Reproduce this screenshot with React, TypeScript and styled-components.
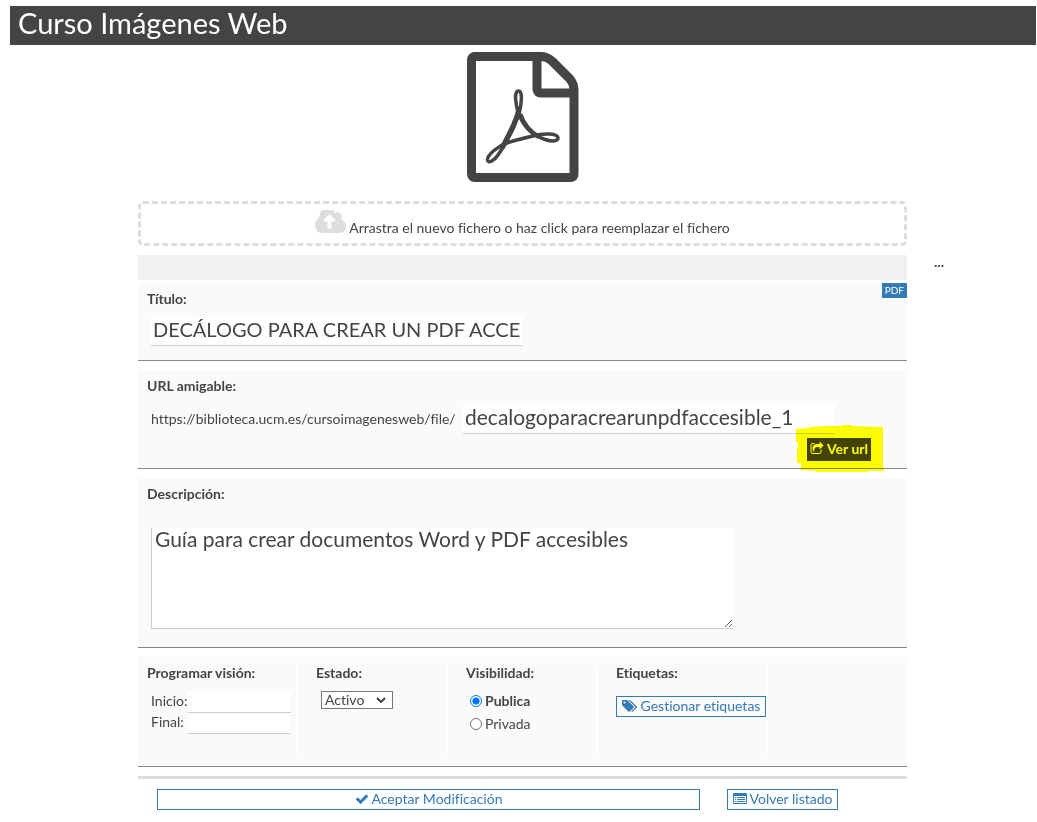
import React from 'react';
import styled, { createGlobalStyle, css } from 'styled-components';

const ink = '#444444';
const blue = '#337ab7';

const GlobalStyle = createGlobalStyle`
  *, *::before, *::after { box-sizing: border-box; }
  body {
    margin: 0;
    background: #ffffff;
    color: ${ink};
    font-family: Lato, "Liberation Sans", sans-serif;
    font-size: 14px;
    font-variant-ligatures: none;
    line-height: 20px;
  }
  input, select, textarea, button { font: inherit; font-variant-ligatures: none; color: inherit; border-radius: 0; }
`;

const Page = styled.div`
  padding: 6px 1px 12px 10px;
`;

const Header = styled.header`
  padding: 0 8px;
  background: ${ink};
  color: #ffffff;
`;

const PageTitle = styled.h1`
  margin: 0;
  font-size: 29px;
  font-weight: 400;
  line-height: 34px;
  padding-bottom: 5px;
`;

const Columns = styled.div`
  display: grid;
  grid-template-columns: 128fr 769fr 129fr;
`;

const Main = styled.main`
  grid-column: 2;
  min-width: 0;
`;

const Aside = styled.aside`
  padding: 207px 27px 0;
  font-weight: 700;
`;

const Preview = styled.div`
  display: flex;
  justify-content: center;
  padding: 7px 0 18px;
`;

const Icon = styled.svg<{ $w: number; $h: number }>`
  display: block;
  flex: none;
  width: ${(p) => p.$w}px;
  height: ${(p) => p.$h}px;
  fill: currentColor;
`;

const DropZone = styled.button`
  display: flex;
  align-items: center;
  justify-content: center;
  gap: 3px;
  width: 100%;
  height: 45px;
  padding: 0 0 4px;
  border: 3px dashed #dddddd;
  border-radius: 5px;
  background: transparent;
  cursor: pointer;

  svg { color: #dddddd; }
  span { padding-top: 12px; }
`;

const Toolbar = styled.div`
  height: 25px;
  margin: 9px 0 3px;
  background: #f1f1f1;
`;

const Panel = styled.section<{ $height: number }>`
  display: flex;
  flex-direction: column;
  position: relative;
  min-height: ${(p) => p.$height}px;
  margin-bottom: 9px;
  padding: 6px 9px 0;
  border-bottom: 1px solid #888888;
  background: #fafafa;
`;

const labelText = css`
  display: block;
  margin: 0;
  font-size: 14px;
  font-weight: 700;
  line-height: 20px;
`;

const Label = styled.label`${labelText}`;
const Heading = styled.h2`${labelText}`;

const Badge = styled.span`
  position: absolute;
  top: 0;
  right: 0;
  padding: 0 3px;
  background: ${blue};
  color: #ffffff;
  font-size: 10px;
  line-height: 15px;
`;

const TextInput = styled.input`
  width: 372px;
  height: 30px;
  min-width: 0;
  padding: 0 2px 4px;
  border: 0;
  border-bottom: 1px solid #cccccc;
  background: #ffffff;
  font-size: 21px;
`;

const TitleInput = styled(TextInput)`
  margin: 7px 0 0 4px;
  font-size: 20px;
`;

const UrlRow = styled.div`
  display: flex;
  align-items: center;
  margin: 8px 0 0 4px;
`;

const UrlPrefix = styled.span`
  flex: 0 0 312px;
`;

const ViewLink = styled.a`
  display: flex;
  align-items: center;
  align-self: flex-end;
  gap: 3px;
  height: 23px;
  margin: 4px 27px 0 0;
  padding: 0 3px 1px;
  background: ${ink};
  color: #ffffff;
  font-weight: 700;
  text-decoration: none;
`;

const Marker = styled.svg`
  position: absolute;
  right: 23px;
  bottom: -5px;
  z-index: 1;
  width: 88px;
  height: 49px;
  fill: #ffff00;
  mix-blend-mode: multiply;
  pointer-events: none;
`;

const Description = styled.textarea`
  display: block;
  width: 582px;
  max-width: 100%;
  height: 101px;
  margin: 24px 0 0 4px;
  padding: 0 3px;
  border: 0;
  border-left: 1px solid #cccccc;
  border-bottom: 1px solid #cccccc;
  background: #ffffff;
  font-size: 21px;
  line-height: 22px;
  resize: both;
`;

const Options = styled(Panel)`
  display: grid;
  grid-template-columns: 160fr 150fr 150fr 170fr 139fr;
  padding: 9px 0 10px;
`;

const Option = styled.div`
  min-width: 0;
  padding-left: 18px;
  border-right: 2px solid #ffffff;

  &:first-child { padding-left: 9px; }
  &:last-child { border-right: 0; }
`;

const OptionHeading = styled(Heading)`
  line-height: 14px;
`;

const OptionLabel = styled(Label)`
  line-height: 14px;
`;

const DateList = styled.div`
  margin: 12px 5px 0 4px;
`;

const DateRow = styled.div`
  display: grid;
  grid-template-columns: 37px 1fr;
  height: 21px;
  line-height: 18px;
`;

const DateInput = styled(TextInput)`
  width: 100%;
  height: 21px;
  font-size: 14px;
`;

const SelectBox = styled.div`
  display: grid;
  grid-template-columns: 1fr 14px;
  align-items: center;
  width: 72px;
  margin: 11px 0 0 5px;
  padding-right: 2px;
  border: 1px solid #767676;
  background: #ffffff;

  select, svg { grid-row: 1; }
  svg { grid-column: 2; pointer-events: none; }
`;

const StateSelect = styled.select`
  appearance: none;
  grid-column: 1 / 3;
  height: 16px;
  padding: 0 16px 0 3px;
  border: 0;
  background: transparent;
  line-height: 16px;
`;

const RadioList = styled.div`
  display: flex;
  flex-direction: column;
  gap: 3px;
  margin: 11px 0 0 4px;
`;

const RadioRow = styled.label<{ $bold?: boolean }>`
  display: flex;
  align-items: center;
  gap: 3px;
  font-weight: ${(p) => (p.$bold ? 700 : 400)};

  input { width: 12px; height: 12px; margin: 0; }
`;

const OutlineButton = styled.button<{ $wide?: boolean }>`
  display: flex;
  align-items: center;
  justify-content: center;
  gap: 3px;
  height: 21px;
  flex: ${(p) => (p.$wide ? '1 1 0' : 'none')};
  padding: 0 4px 2px;
  border: 1px solid ${blue};
  background: #ffffff;
  color: ${blue};
  white-space: nowrap;
  cursor: pointer;
`;

const TagsButton = styled(OutlineButton)`
  width: 150px;
  margin-top: 16px;
  background: transparent;
`;

const BackButton = styled(OutlineButton)`
  width: 111px;
`;

const Actions = styled.div`
  display: flex;
  gap: 27px;
  padding: 10px 69px 0 19px;
  border-top: 3px solid #dddddd;
`;

const PdfIcon = () => (
  <Icon $w={112} $h={131} viewBox="0 0 112 131" role="img" aria-label="Documento PDF">
    <g fill="none" stroke={ink} strokeLinejoin="round">
      <path d="M7 4.500H74Q80 4.500 85 9L103 27Q107 32 107 38V122Q107 125.500 104 125.500H8Q4.500 125.500 4.500 122V8Q4.500 4.500 8 4.500Z" strokeWidth="9" />
      <path d="M70 5V37Q70 41 74 41H107" strokeWidth="9" />
      <path d="M52 62C48 52 47 39 51.500 39C56 39 54.500 52 52 62C56 74 65 83 78 87.500C86 90 91 89 91 86C91 81 76 81 66 84C57 86 48 88 40 91C31 94 20 103 20.500 108C21 112 27 109 31 103C38 93 47 77 52 62Z" strokeWidth="3.500" />
      <path d="M51.500 58C50 68 42 83 35 96" strokeWidth="5" />
      <path d="M53 62C57 73 63 80 72 85" strokeWidth="4.500" />
    </g>
  </Icon>
);

const CloudIcon = () => (
  <Icon $w={31} $h={23} viewBox="0 256 1920 1280" preserveAspectRatio="none">
    <path d="M1280 864q0-14-9-23l-352-352q-9-9-23-9t-23 9l-351 351q-10 12-10 24 0 14 9 23t23 9h224v352q0 13 9.500 22.500t22.500 9.500h192q13 0 22.500-9.500t9.500-22.500v-352h224q13 0 22.500-9.500t9.500-22.500zm640 288q0 159-112.500 271.500t-271.500 112.500h-1088q-185 0-316.500-131.500t-131.500-316.500q0-130 70-240t188-165q-2-30-2-43 0-212 150-362t362-150q156 0 285.500 87t188.500 231q71-62 166-62 106 0 181 75t75 181q0 76-41 138 130 31 213.500 135.500t83.500 238.500z" />
  </Icon>
);

const ShareIcon = () => (
  <Icon $w={14} $h={14} viewBox="0 0 1792 1792">
    <path d="M1472 989v259q0 119-84.500 203.500t-203.500 84.500h-832q-119 0-203.500-84.500t-84.500-203.500v-832q0-119 84.500-203.500t203.500-84.500h255q13 0 22.500 9.500t9.500 22.500q0 27-26 32-77 26-133 60-10 4-16 4h-112q-66 0-113 47t-47 113v832q0 66 47 113t113 47h832q66 0 113-47t47-113v-214q0-19 18-29 28-13 54-37 16-16 35-8 21 9 21 29zm237-496l-384 384q-18 19-45 19-12 0-25-5-39-17-39-59v-192h-160q-323 0-438 131-119 137-74 473 3 23-20 34-8 2-12 2-16 0-26-13-10-14-21-31t-39.500-68.500-49.500-99.500-38.500-114-17.500-122q0-49 3.500-91t14-90 28-88 47-81.500 68.500-74 94.500-61.500 124.500-48.500 159.500-30.500 196.500-11h160v-192q0-42 39-59 13-5 25-5 26 0 45 19l384 384q19 19 19 45t-19 45z" />
  </Icon>
);

const TagsIcon = () => (
  <Icon $w={16} $h={14} viewBox="0 0 1920 1792">
    <path d="M384 448q0-53-37.500-90.500t-90.500-37.500-90.500 37.500-37.500 90.500 37.500 90.500 90.500 37.500 90.500-37.500 37.500-90.500zm1067 576q0 53-37 90l-491 492q-39 37-91 37-53 0-90-37l-715-716q-38-37-64.500-101t-26.500-117v-416q0-52 38-90t90-38h416q53 0 117 26.500t102 64.500l715 714q37 39 37 91zm384 0q0 53-37 90l-491 492q-39 37-91 37-36 0-59-14t-53-45l470-470q37-37 37-90 0-52-37-91l-715-714q-38-38-102-64.500t-117-26.500h224q53 0 117 26.500t102 64.500l715 714q37 39 37 91z" />
  </Icon>
);

const CheckIcon = () => (
  <Icon $w={14} $h={14} viewBox="0 0 1792 1792">
    <path d="M1671 566q0 40-28 68l-724 724-136 136q-28 28-68 28t-68-28l-136-136-362-362q-28-28-28-68t28-68l136-136q28-28 68-28t68 28l294 295 656-657q28-28 68-28t68 28l136 136q28 28 28 68z" />
  </Icon>
);

const ListIcon = () => (
  <Icon $w={14} $h={12} viewBox="0 0 14 12">
    <path fillRule="evenodd" d="M1 0H13Q14 0 14 1V10Q14 11 13 11H1Q0 11 0 10V1Q0 0 1 0ZM1 3V10H13V3Z" />
    <path d="M2 4H3V5H2ZM4 4H12V5H4ZM2 6H3V7H2ZM4 6H12V7H4ZM2 8H3V9H2ZM4 8H12V9H4Z" />
  </Icon>
);

const ChevronIcon = () => (
  <Icon $w={10} $h={6} viewBox="0 0 10 6" aria-hidden="true">
    <path d="M1 1L5 5L9 1" fill="none" stroke="currentColor" strokeWidth="2" />
  </Icon>
);

export default function App() {
  return (
    <Page>
      <GlobalStyle />
      <Header>
        <PageTitle>Curso Imágenes Web</PageTitle>
      </Header>
      <Columns>
        <Main>
          <Preview><PdfIcon /></Preview>
          <DropZone type="button">
            <CloudIcon />
            <span>Arrastra el nuevo fichero o haz click para reemplazar el fichero</span>
          </DropZone>
          <Toolbar />

          <Panel $height={78}>
            <Label htmlFor="titulo">Título:</Label>
            <Badge>PDF</Badge>
            <TitleInput id="titulo" defaultValue="DECÁLOGO PARA CREAR UN PDF ACCESIBLE" />
          </Panel>

          <Panel $height={99}>
            <Label htmlFor="url">URL amigable:</Label>
            <UrlRow>
              <UrlPrefix>https://biblioteca.ucm.es/cursoimagenesweb/file/</UrlPrefix>
              <TextInput id="url" defaultValue="decalogoparacrearunpdfaccesible_1" />
            </UrlRow>
            <ViewLink href="#ver"><ShareIcon />Ver url</ViewLink>
            <Marker viewBox="0 0 88 49" aria-hidden="true">
              <path d="M0 5L14 4V3L30 2H46V1H56V2L87 3V44H88V47H72V48H20V47L5 46V39H1V24L2 23V19L0 18Z" />
            </Marker>
          </Panel>

          <Panel $height={170}>
            <Label htmlFor="descripcion">Descripción:</Label>
            <Description id="descripcion" defaultValue="Guía para crear documentos Word y PDF accesibles" />
          </Panel>

          <Options $height={110}>
            <Option>
              <OptionHeading>Programar visión:</OptionHeading>
              <DateList>
                <DateRow><label htmlFor="inicio">Inicio:</label><DateInput id="inicio" /></DateRow>
                <DateRow><label htmlFor="final">Final:</label><DateInput id="final" /></DateRow>
              </DateList>
            </Option>
            <Option>
              <OptionLabel htmlFor="estado">Estado:</OptionLabel>
              <SelectBox>
                <StateSelect id="estado" defaultValue="Activo">
                  <option>Activo</option>
                  <option>Inactivo</option>
                </StateSelect>
                <ChevronIcon />
              </SelectBox>
            </Option>
            <Option>
              <OptionHeading>Visibilidad:</OptionHeading>
              <RadioList>
                <RadioRow $bold><input type="radio" name="visibilidad" defaultChecked />Publica</RadioRow>
                <RadioRow><input type="radio" name="visibilidad" />Privada</RadioRow>
              </RadioList>
            </Option>
            <Option>
              <OptionHeading>Etiquetas:</OptionHeading>
              <TagsButton type="button"><TagsIcon />Gestionar etiquetas</TagsButton>
            </Option>
            <Option />
          </Options>

          <Actions>
            <OutlineButton type="submit" $wide><CheckIcon />Aceptar Modificación</OutlineButton>
            <BackButton type="button"><ListIcon />Volver listado</BackButton>
          </Actions>
        </Main>
        <Aside>...</Aside>
      </Columns>
    </Page>
  );
}
